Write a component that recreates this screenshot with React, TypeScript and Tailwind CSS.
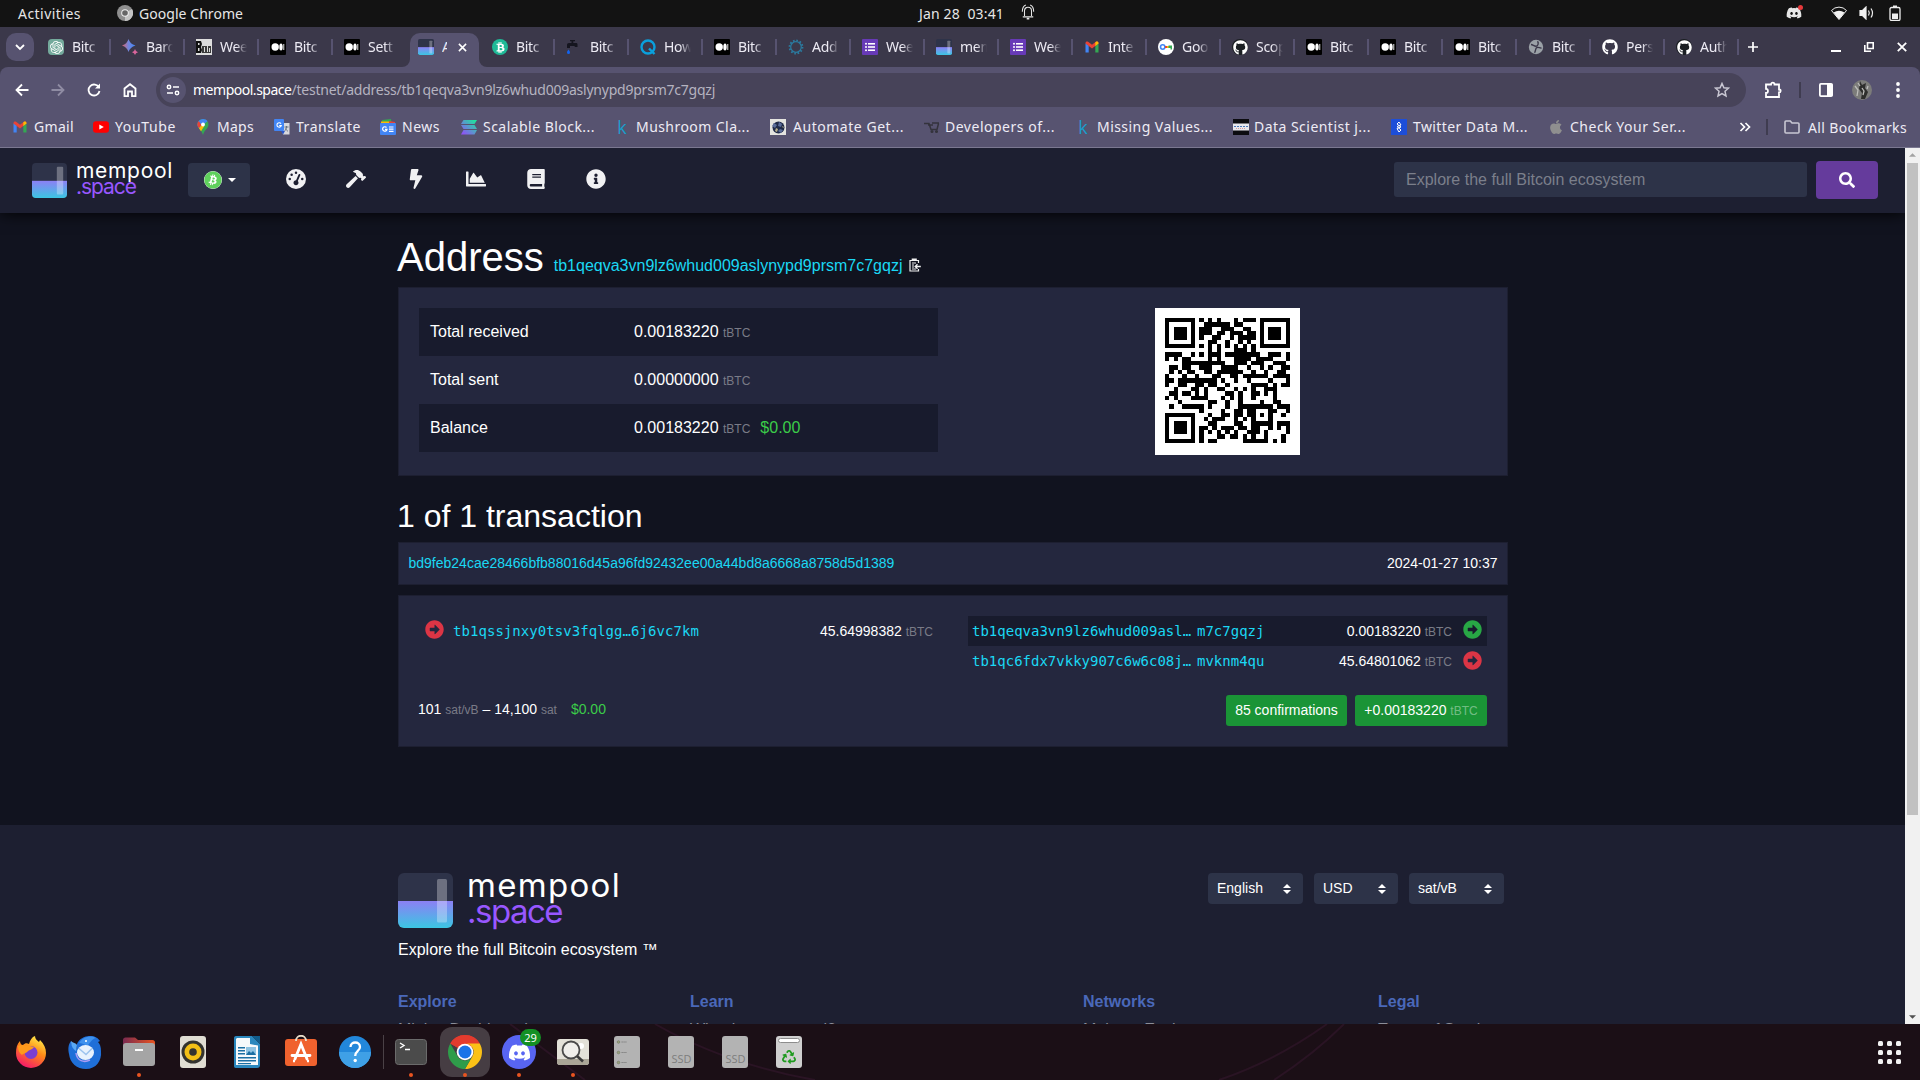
import React from "react";
import {
  FaHammer, FaBolt, FaChartArea, FaBook, FaInfoCircle, FaSearch, FaGithub,
  FaDiscord, FaBitcoin, FaBtc, FaApple, FaRecycle, FaArrowAltCircleRight,
} from "react-icons/fa";
import { FaGaugeHigh } from "react-icons/fa6";
import { SiOpenai } from "react-icons/si";

/* ---------- text that is tracked to an exact width ---------- */
const measure = (text: string, font: string) => {
  const ctx = document.createElement("canvas").getContext("2d")!;
  ctx.font = font;
  return ctx.measureText(text).width;
};

function Fit({ w, size = 14, font = "Noto Sans", weight = 400, className = "", children }: {
  w: number; size?: number; font?: string; weight?: number; className?: string; children: string;
}) {
  const natural = measure(children, `${weight} ${size}px "${font}"`);
  return (
    <span
      className={"whitespace-pre " + className}
      style={{ fontFamily: `"${font}", sans-serif`, fontSize: size, fontWeight: weight, letterSpacing: (w - natural) / children.length }}
    >
      {children}
    </span>
  );
}

/* ---------- QR code, version 3-L, byte mode ---------- */
function qrMatrix(text: string, mask: number): boolean[][] {
  const N = 29, DATA = 55, EC = 15;
  const bits: number[] = [];
  const put = (v: number, n: number) => { for (let i = n - 1; i >= 0; i--) bits.push((v >> i) & 1); };
  put(4, 4);
  put(text.length, 8);
  for (const c of text) put(c.charCodeAt(0), 8);
  put(0, 4);
  while (bits.length % 8) bits.push(0);
  const words: number[] = [];
  for (let i = 0; i < bits.length; i += 8) words.push(parseInt(bits.slice(i, i + 8).join(""), 2));
  for (let p = 0; words.length < DATA; p++) words.push(p % 2 ? 0x11 : 0xec);

  const mul = (a: number, b: number) => {
    let r = 0;
    for (let i = 7; i >= 0; i--) { r = (r << 1) ^ ((r >> 7) * 0x11d); if ((b >> i) & 1) r ^= a; }
    return r;
  };
  const gen: number[] = new Array(EC).fill(0);
  gen[EC - 1] = 1;
  let root = 1;
  for (let i = 0; i < EC; i++) {
    for (let j = 0; j < EC; j++) { gen[j] = mul(gen[j], root); if (j + 1 < EC) gen[j] ^= gen[j + 1]; }
    root = mul(root, 2);
  }
  const rem: number[] = new Array(EC).fill(0);
  for (const d of words) {
    const f = d ^ rem.shift()!;
    rem.push(0);
    gen.forEach((g, i) => { rem[i] ^= mul(g, f); });
  }
  const all = words.concat(rem);

  const m: boolean[][] = Array.from({ length: N }, () => new Array(N).fill(false));
  const used: boolean[][] = Array.from({ length: N }, () => new Array(N).fill(false));
  const set = (r: number, c: number, v: boolean) => { if (r >= 0 && c >= 0 && r < N && c < N) { m[r][c] = v; used[r][c] = true; } };
  for (let i = 0; i < N; i++) { set(6, i, i % 2 === 0); set(i, 6, i % 2 === 0); }
  for (const [cr, cc] of [[3, 3], [3, N - 4], [N - 4, 3]])
    for (let y = -4; y <= 4; y++) for (let x = -4; x <= 4; x++) {
      const d = Math.max(Math.abs(x), Math.abs(y));
      set(cr + y, cc + x, d !== 2 && d !== 4);
    }
  for (let y = -2; y <= 2; y++) for (let x = -2; x <= 2; x++) set(22 + y, 22 + x, Math.max(Math.abs(x), Math.abs(y)) !== 1);

  const fd = (1 << 3) | mask;
  let fr = fd;
  for (let i = 0; i < 10; i++) fr = (fr << 1) ^ ((fr >> 9) * 0x537);
  const fmt = ((fd << 10) | fr) ^ 0x5412;
  const b = (i: number) => ((fmt >> i) & 1) === 1;
  for (let i = 0; i <= 5; i++) set(i, 8, b(i));
  set(7, 8, b(6)); set(8, 8, b(7)); set(8, 7, b(8));
  for (let i = 9; i < 15; i++) set(8, 14 - i, b(i));
  for (let i = 0; i < 8; i++) set(8, N - 1 - i, b(i));
  for (let i = 8; i < 15; i++) set(N - 15 + i, 8, b(i));
  set(N - 8, 8, true);

  const masks: ((r: number, c: number) => boolean)[] = [
    (r, c) => (r + c) % 2 === 0, (r) => r % 2 === 0, (_, c) => c % 3 === 0, (r, c) => (r + c) % 3 === 0,
    (r, c) => (Math.floor(c / 3) + Math.floor(r / 2)) % 2 === 0, (r, c) => ((r * c) % 2) + ((r * c) % 3) === 0,
    (r, c) => (((r * c) % 2) + ((r * c) % 3)) % 2 === 0, (r, c) => (((r + c) % 2) + ((r * c) % 3)) % 2 === 0,
  ];
  let k = 0;
  for (let right = N - 1; right >= 1; right -= 2) {
    if (right === 6) right = 5;
    for (let v = 0; v < N; v++) for (let j = 0; j < 2; j++) {
      const c = right - j;
      const up = ((right + 1) & 2) === 0;
      const r = up ? N - 1 - v : v;
      if (used[r][c]) continue;
      const bit = k < all.length * 8 ? ((all[k >> 3] >> (7 - (k & 7))) & 1) === 1 : false;
      k++;
      m[r][c] = bit !== masks[mask](r, c);
    }
  }
  return m;
}

const ADDRESS = "tb1qeqva3vn9lz6whud009aslynypd9prsm7c7gqzj";

function QR() {
  const m = qrMatrix(ADDRESS, 3);
  return (
    <svg className="block size-[125px]" viewBox="0 0 29 29" shapeRendering="crispEdges">
      {m.map((row, r) => row.map((on, c) => (on ? <rect key={r + "-" + c} x={c} y={r} width="1" height="1" /> : null)))}
    </svg>
  );
}

/* ---------- favicons ---------- */
const Medium = () => (
  <svg viewBox="0 0 16 16" className="size-4"><rect width="16" height="16" rx="1" fill="#000" /><circle cx="5.2" cy="8" r="3.7" fill="#fff" /><ellipse cx="11" cy="8" rx="1.7" ry="3.5" fill="#fff" /><rect x="13.2" y="5" width="1.1" height="6" fill="#ccc" /></svg>
);
const Mem = ({ className = "size-4" }: { className?: string }) => (
  <svg viewBox="0 0 55 55" className={className}>
    <defs>
      <linearGradient id="mg" x1="0" y1="0" x2="0" y2="1"><stop offset="0" stopColor="#8c80f5" /><stop offset="1" stopColor="#3bc6e2" /></linearGradient>
      <clipPath id="mc"><rect width="55" height="55" rx="6" /></clipPath>
    </defs>
    <g clipPath="url(#mc)"><rect width="55" height="55" fill="#2e3349" /><rect y="28" width="55" height="27" fill="url(#mg)" /></g>
    <rect x="39" y="6" width="10" height="43.500" rx="1.500" fill="#fff" opacity=".3" />
  </svg>
);
const Gmail = () => (
  <svg viewBox="0 0 16 16" className="size-4"><path d="M1.500 13.500V4.200l3.200 2.400v6.900z" fill="#4285f4" /><path d="M11.300 13.500V6.600l3.200-2.400v9.300z" fill="#34a853" /><path d="M1.500 4.600V4c0-1.400 1.500-2 2.600-1.200L8 5.800l3.900-3C13 2 14.500 2.600 14.500 4v.6L8 9.500z" fill="#ea4335" /><path d="M11.300 3.300l.6-.5C13 2 14.500 2.600 14.500 4v.6l-3.200 2.400z" fill="#fbbc04" /></svg>
);
const Forms = () => (
  <svg viewBox="0 0 16 16" className="size-4"><rect width="16" height="16" rx="1" fill="#673ab7" /><g fill="#fff"><circle cx="4" cy="4.800" r="1" /><circle cx="4" cy="8" r="1" /><circle cx="4" cy="11.200" r="1" /><rect x="6" y="4" width="7" height="1.600" /><rect x="6" y="7.200" width="7" height="1.600" /><rect x="6" y="10.400" width="7" height="1.600" /></g></svg>
);
const Gpt = () => (
  <span className="flex size-4 items-center justify-center rounded-sm bg-[#74aa9c] text-white"><SiOpenai size={13} /></span>
);
const Bard = () => (
  <svg viewBox="0 0 16 16" className="size-4"><defs><linearGradient id="bd"><stop offset="0" stopColor="#d96570" /><stop offset=".5" stopColor="#6f86e0" /><stop offset="1" stopColor="#4285f4" /></linearGradient></defs><path d="M6.500 0Q8 5 13.500 6.500 8 8 6.500 13 5 8 0 6.500 5 5 6.500 0z" fill="url(#bd)" /><path d="M13 10q.6 2.800 3 3.300-2.400.5-3 2.700-.6-2.200-3-2.700 2.400-.5 3-3.300z" fill="#d9659c" /></svg>
);
const Beans = () => (
  <svg viewBox="0 0 16 16" className="size-4"><rect width="16" height="16" fill="#ddd" /><path d="M0 2h5l1 3-1 3 1 3-1 3H0z" fill="#111" /><path d="M2 4h1.500v2H2zM2 9h1.500v3H2z" fill="#ddd" /><path d="M6 7h9v7H6z" fill="#3b3b3b" /><path d="M8 8h1v5H8zM11 7h1v6h-1zM13 9h1v4h-1z" fill="#ddd" /></svg>
);
const BtcTeal = () => (
  <span className="flex size-4 items-center justify-center rounded-full bg-[#1fb997] text-white"><FaBtc size={11} /></span>
);
const Faucet = () => (
  <svg viewBox="0 0 16 16" className="size-4"><path d="M4 1h5v1.200H7.300V4H10c1 0 1.500.5 1.500 1.500V8h-2.800V7H4v2H1V6c0-1.300.8-2 2-2h2.500V2.200H4z" fill="#15151f" /><path d="M2.500 10.500c.8 1.300 1.500 2 1.500 3a1.500 1.500 0 0 1-3 0c0-1 .7-1.700 1.500-3z" fill="#1263f0" /></svg>
);
const QLogo = () => (
  <svg viewBox="0 0 16 16" className="size-4" fill="none" stroke="#0aa0dc" strokeWidth="2.400"><circle cx="8" cy="8" r="6.500" /><path d="M9 9.500l5.500 5.500" /></svg>
);
const Ring = () => (
  <svg viewBox="0 0 16 16" className="size-4" fill="none" stroke="#2b7ba0"><circle cx="8" cy="8" r="5.300" strokeWidth="1.200" /><circle cx="8" cy="8" r="6.400" strokeWidth="2" strokeDasharray="1.600 1.700" /></svg>
);
const Goo = () => (
  <svg viewBox="0 0 16 16" className="size-4"><circle cx="8" cy="8" r="8" fill="#fff" /><circle cx="4.700" cy="8" r="2.200" fill="none" stroke="#4285f4" strokeWidth="1.600" /><rect x="7" y="7" width="3" height="2" fill="#ea4335" /><rect x="9" y="7" width="2" height="2" fill="#fbbc04" /><path d="M10.500 6.500h3.500v4h-1.500V9h-2z" fill="#34a853" /></svg>
);
const GhBadge = () => (
  <span className="flex size-4 items-center justify-center rounded-full bg-[#1b1f23] text-white"><FaGithub size={15} /></span>
);
const Globe = () => (
  <svg viewBox="0 0 16 16" className="size-4"><circle cx="8" cy="8" r="7.200" fill="#9aa0a6" /><path d="M3 5.500c2 .2 3 1.700 5 1.700S11 4 9.500 2.200M13.500 9c-2 .3-2.500-1-4.500-.5S8 12 6.500 13.800" stroke="#3b384a" strokeWidth="1.400" fill="none" /></svg>
);

type Tab = { t: string; i: React.ReactNode; sep?: boolean };
const TABS: Tab[] = [
  { t: "Bitc", i: <Gpt />, sep: true }, { t: "Bard", i: <Bard />, sep: true }, { t: "Wee", i: <Beans />, sep: true },
  { t: "Bitc", i: <Medium />, sep: true }, { t: "Sett", i: <Medium /> },
  { t: "A", i: <Mem /> },
  { t: "Bitc", i: <BtcTeal />, sep: true }, { t: "Bitc", i: <Faucet />, sep: true }, { t: "How", i: <QLogo />, sep: true },
  { t: "Bitc", i: <Medium />, sep: true }, { t: "Add", i: <Ring />, sep: true }, { t: "Wee", i: <Forms />, sep: true },
  { t: "mem", i: <Mem />, sep: true }, { t: "Wee", i: <Forms />, sep: true }, { t: "Inte", i: <Gmail />, sep: true },
  { t: "Goo", i: <Goo />, sep: true }, { t: "Scop", i: <GhBadge />, sep: true }, { t: "Bitc", i: <Medium />, sep: true },
  { t: "Bitc", i: <Medium />, sep: true }, { t: "Bitc", i: <Medium />, sep: true }, { t: "Bitc", i: <Globe />, sep: true },
  { t: "Pers", i: <FaGithub size={16} color="#fff" />, sep: true }, { t: "Auth", i: <GhBadge />, sep: true },
];

const Kaggle = () => <span className="font-['Open_Sans'] text-[18px] leading-none text-[#1a9dcb]">k</span>;

/* x: start of the icon slot, tx: start of the label, w: label width, n: start of the next item */
const MARKS = [
  { t: "Gmail", i: <Gmail />, x: 12, tx: 34, w: 40, n: 93 },
  { t: "YouTube", i: <svg viewBox="0 0 16 16" className="size-4"><rect y="2.200" width="16" height="11.600" rx="3" fill="#f00" /><path d="M6.300 5.400l4.500 2.600-4.500 2.600z" fill="#fff" /></svg>, x: 93, tx: 115, w: 61, n: 195 },
  { t: "Maps", i: <svg viewBox="0 0 16 16" className="size-4"><path d="M8 0a5.500 5.500 0 0 1 5.500 5.500c0 4-4 5-5.500 10.500C6.500 10.500 2.500 9.500 2.500 5.500A5.500 5.500 0 0 1 8 0z" fill="#34a853" /><path d="M2.500 5.500A5.500 5.500 0 0 1 8 0c2 0 3.500.8 4.500 2.200L4 9.300c-.9-1.200-1.500-2.300-1.500-3.800z" fill="#4285f4" /><path d="M3.800 2A5.500 5.500 0 0 0 4 9.300l2.500-3z" fill="#ea4335" /><path d="M4 9.300l3-3.500 2.500 1L6 12.300z" fill="#fbbc04" /><circle cx="8" cy="5.500" r="1.900" fill="#fff" /></svg>, x: 195, tx: 217, w: 37, n: 274 },
  { t: "Translate", i: <svg viewBox="0 0 16 16" className="size-4"><path d="M6 4h9.500v11.500H9z" fill="#d8d8dc" /><rect width="10" height="12" rx="1" fill="#4285f4" /><path d="M7 12h4l-2 3.500z" fill="#2a56c6" /><path d="M7 4.700A2.200 2.200 0 1 0 7.300 6.500H5.200" stroke="#fff" strokeWidth="1.100" fill="none" /><path d="M10.500 8h4M12.500 7v1c0 2-1 3-2 4M11.500 9.500c.5 1.500 1.500 2 2.500 2.800" stroke="#5f6a78" fill="none" strokeWidth=".9" /></svg>, x: 274, tx: 296, w: 65, n: 380 },
  { t: "News", i: <svg viewBox="0 0 16 16" className="size-4"><path d="M2 1l9-1 .5 5H2z" fill="#34a853" /><path d="M1 2.500h8V6H1z" fill="#fbbc04" /><path d="M9 2l6 1v3H9z" fill="#ea4335" /><rect y="4" width="16" height="12" rx="1" fill="#4285f4" /><path d="M6.500 8.500A2.200 2.200 0 1 0 7 10.300H5M9 8h4.500M9 10.200h4.500M9 12.400h4.500" stroke="#fff" strokeWidth="1.200" fill="none" /></svg>, x: 380, tx: 402, w: 38, n: 461 },
  { t: "Scalable Block...", i: <svg viewBox="0 0 16 16" className="size-4"><defs><linearGradient id="sol" x1="1" y1="0" x2="0" y2="1"><stop offset="0" stopColor="#14f195" /><stop offset="1" stopColor="#9945ff" /></linearGradient></defs><path d="M2.500 1H16l-2.500 4H0zM0 6h13.500L16 10H2.500zM2.500 11H16l-2.500 4.500H0z" fill="url(#sol)" /></svg>, x: 460, tx: 482, w: 112, n: 613 },
  { t: "Mushroom Cla...", i: <Kaggle />, x: 614, tx: 636, w: 114, n: 770 },
  { t: "Automate Get...", i: <svg viewBox="0 0 16 16" className="size-4"><rect width="16" height="16" fill="#e4e4e0" /><circle cx="8.500" cy="8.500" r="6" fill="#1f2a48" /><path d="M4 4l3 2-2 3-3-2zM9 3l3 2-1 3-3-1zM10 10l3 1-2 3-3-2z" fill="#5a6c9a" /><path d="M6 9l2 1-1 3-2-1zM12 7l2 1-1 1z" fill="#b9b08a" /></svg>, x: 769, tx: 792, w: 111, n: 923 },
  { t: "Developers of...", i: <svg viewBox="0 0 16 16" className="size-4" fill="none" stroke="#34333c" strokeWidth="1.500"><path d="M0 4.500h5l2 6h6l1.500-6M4 6h5M8 4h7" /><circle cx="8" cy="12.500" r=".8" /><circle cx="12.500" cy="12.500" r=".8" /></svg>, x: 924, tx: 945, w: 110, n: 1075 },
  { t: "Missing Values...", i: <Kaggle />, x: 1075, tx: 1097, w: 116, n: 1233 },
  { t: "Data Scientist j...", i: <svg viewBox="0 0 16 16" className="size-4"><rect width="16" height="16" fill="#0c0c10" /><rect y="4.500" width="16" height="7" fill="#e8e8ee" /><path d="M1 7.500h14" stroke="#4a78b8" strokeDasharray="2 1" /><path d="M3 9.500h10" stroke="#c77" strokeWidth=".7" strokeDasharray="1 1" /></svg>, x: 1233, tx: 1254, w: 117, n: 1391 },
  { t: "Twitter Data M...", i: <svg viewBox="0 0 16 16" className="size-4"><rect width="16" height="16" fill="#1d4ed8" /><path d="M8 3l-2 2 4 3-4 1.500L8 13l2-2-4-3.500L10 6z" stroke="#fff" strokeWidth="1" fill="none" /></svg>, x: 1391, tx: 1413, w: 115, n: 1548 },
  { t: "Check Your Ser...", i: <FaApple size={16} color="#8f8f8f" />, x: 1548, tx: 1570, w: 116, n: 1700 },
];

/* ---------- desktop top bar ---------- */
function TopBar() {
  return (
    <div className="flex h-[27px] items-center bg-[#131313] text-[#e6e6e6]">
      <div className="-mt-0.5 ml-[18px] w-[99px]"><Fit w={63}>Activities</Fit></div>
      <svg viewBox="0 0 16 16" className="-mt-0.5 size-4"><circle cx="8" cy="8" r="8" fill="#8f8f8f" /><path d="M8 8L15 4a8 8 0 0 1-7 12z" fill="#c4c4c4" /><circle cx="8" cy="8" r="3.800" fill="#eee" /><circle cx="8" cy="8" r="2.800" fill="#666" /></svg>
      <div className="-mt-0.5 ml-1.5 w-[780px]"><Fit w={104}>Google Chrome</Fit></div>
      <div className="-mt-0.5"><Fit w={85}>Jan 28  03:41</Fit></div>
      <svg viewBox="0 0 16 18" className="-mt-0.5 ml-[17px] h-[17px] w-[14px]" fill="none" stroke="#e6e6e6" strokeWidth="1.200"><path d="M4 13V7a4 4 0 0 1 8 0v6M2 14h12M1.500 8c0-4 1.500-6.500 4-7.500M14.500 8c0-4-1.500-6.500-4-7.500" /><path d="M6.500 16h3" strokeWidth="2" /></svg>
      <div className="relative -mt-0.5 ml-[751px]"><FaDiscord size={16} /><span className="absolute -right-px top-0 size-[5px] rounded-full bg-[#e5393b]" /></div>
      <svg viewBox="0 0 16 14" className="-mt-0.5 ml-[29px] h-[14px] w-4"><path d="M8 13.500L.5 4.500A10 10 0 0 1 15.500 4.500z" fill="none" stroke="#eee" strokeWidth="1" /><path d="M8 13.500L2.500 6.500q5.500-3.500 11 0z" fill="#f2f2f2" /></svg>
      <svg viewBox="0 0 16 14" className="-mt-0.5 ml-[12px] h-[14px] w-4" fill="none" stroke="#eee" strokeWidth="1.200"><path d="M1 4.500h2.500L7 1v12L3.500 9.500H1z" fill="#f2f2f2" /><path d="M9.500 4.500q1.600 2.500 0 5M12 2.500q3 4.500 0 9" /></svg>
      <svg viewBox="0 0 12 16" className="-mt-0.5 ml-[14px] h-4 w-3"><rect x="1" y="2.500" width="10" height="13" rx="1.500" fill="none" stroke="#eee" strokeWidth="1.300" /><rect x="4" y=".5" width="4" height="2" fill="#eee" /><rect x="3" y="8.500" width="6" height="5.500" fill="#eee" /></svg>
    </div>
  );
}

/* ---------- browser chrome ---------- */
function TabStrip() {
  return (
    <div className="flex h-10 bg-[#3b384a] text-[#eceaf3]">
      <div className="ml-1.5 mt-1.5 flex h-7 w-7 items-center justify-center rounded-[10px] bg-[#575370]">
        <svg viewBox="0 0 10 10" className="size-2.5" fill="none" stroke="#fff" strokeWidth="1.800"><path d="M1 3l4 4 4-4" /></svg>
      </div>
      <div className="ml-[3px] flex">
        {TABS.map((tab, i) =>
          i === 5 ? (
            <div key={i} className="relative mt-1.5 flex h-[34px] w-[74px] items-center">
              <div className="absolute inset-y-0 left-[3px] right-[2px] rounded-t-[10px] bg-[#575370]" />
              <svg viewBox="0 0 8 8" className="absolute bottom-0 -left-[5px] size-2"><path d="M8 0v8H0a8 8 0 0 0 8-8z" fill="#575370" /></svg>
              <svg viewBox="0 0 8 8" className="absolute bottom-0 -right-[6px] size-2"><path d="M0 0v8h8a8 8 0 0 1-8-8z" fill="#575370" /></svg>
              <div className="relative -mt-1.5 ml-[11px] flex items-center">
                {tab.i}
                <span className="ml-2 w-[5px] overflow-hidden font-['Noto_Sans'] text-sm">A</span>
                <svg viewBox="0 0 10 10" className="ml-[11px] size-[9px]" stroke="#fff" strokeWidth="1.700"><path d="M1 1l8 8M9 1l-8 8" /></svg>
              </div>
            </div>
          ) : (
            <div key={i} className="flex w-[74px] items-center pl-[11px]">
              <span className="flex size-4 shrink-0 items-center justify-center">{tab.i}</span>
              <span className="ml-2 w-7 overflow-hidden whitespace-nowrap font-['Noto_Sans'] text-sm tracking-[-0.3px] [mask-image:linear-gradient(90deg,#000_60%,transparent)]">{tab.t}</span>
              {tab.sep && <span className="ml-[10px] h-4 w-0.5 shrink-0 bg-[#575370]" />}
            </div>
          )
        )}
      </div>
      <svg viewBox="0 0 10 10" className="ml-[9px] mt-[15px] size-2.5" stroke="#fff" strokeWidth="1.700"><path d="M5 0v10M0 5h10" /></svg>
      <div className="ml-auto mr-[13px] flex items-center gap-[23px] text-white">
        <span className="mt-2 h-0.5 w-2.5 bg-white" />
        <svg viewBox="0 0 10 10" className="h-2.5 w-2.5" fill="none" stroke="#fff" strokeWidth="1.600"><path d="M3.500.800h5.700v5.700H3.500zM.8 3v6.200H7" /></svg>
        <svg viewBox="0 0 10 10" className="h-2.5 w-2.5" stroke="#fff" strokeWidth="1.800"><path d="M.8.800l8.400 8.400M9.200.800L.8 9.200" /></svg>
      </div>
    </div>
  );
}

function Toolbar() {
  const s = { fill: "none", stroke: "#fff", strokeWidth: 1.8 };
  return (
    <div className="bg-[#3b384a]">
      <div className="h-[81px] rounded-t-lg border-b border-[#7b7891] bg-[#575370] text-[#eeecf5]">
        <div className="flex h-[46px] items-center">
          <svg viewBox="0 0 14 14" className="ml-[15px] size-3.5" {...s}><path d="M13.500 7H1.500M7 1.500L1.500 7 7 12.500" /></svg>
          <svg viewBox="0 0 14 14" className="ml-[22px] size-3.5" {...s} stroke="#8f8ca3"><path d="M.5 7h12M7 1.500L12.500 7 7 12.500" /></svg>
          <svg viewBox="0 0 14 14" className="ml-[22px] size-3.5" {...s}><path d="M12 4.500A5.500 5.500 0 1 0 12.500 8" /><path d="M13 .5v5H8z" fill="#fff" stroke="none" /></svg>
          <svg viewBox="0 0 14 14" className="ml-[22px] size-3.5" {...s}><path d="M1.500 5.500L7 1.200l5.500 4.300v7.700H9V8.500H5v4.700H1.500z" /></svg>
          <div className="ml-[19px] flex h-[34px] w-[1590px] items-center rounded-full bg-[#474359] pl-1">
            <span className="flex size-[26px] items-center justify-center rounded-full bg-[#575370]">
              <svg viewBox="0 0 14 12" className="h-3 w-3.5" fill="none" stroke="#fff" strokeWidth="1.500"><circle cx="3" cy="3" r="1.700" /><path d="M7 3h6M1 9h6" /><circle cx="11" cy="9" r="1.700" /></svg>
            </span>
            <span className="-mt-0.5 ml-[7px] flex">
              <Fit w={98.5} className="text-white">mempool.space</Fit>
              <Fit w={423.5} className="text-[#b5b3c0]">/testnet/address/tb1qeqva3vn9lz6whud009aslynypd9prsm7c7gqzj</Fit>
            </span>
            <svg viewBox="0 0 16 16" className="ml-auto mr-4 size-4" fill="none" stroke="#c9c7d3" strokeWidth="1.500"><path d="M8 1.500l1.900 4.300 4.600.4-3.500 3.100 1 4.600L8 11.500l-4 2.400 1-4.600L1.500 6.200l4.600-.4z" /></svg>
          </div>
          <svg viewBox="0 0 18 18" className="ml-[18px] h-[18px] w-[18px]" fill="none" stroke="#fff" strokeWidth="1.800"><path d="M2 3.500h5c0-2.500 3.500-2.500 3.500 0h4.500v5c2.200 0 2.200 3 0 3v4.500H2v-4c2.600 0 2.600-4.200 0-4.200z" /></svg>
          <span className="ml-[17px] h-4 w-0.5 bg-[#3f3c50]" />
          <svg viewBox="0 0 14 14" className="ml-[18px] size-3.5" ><rect x=".9" y=".9" width="12.200" height="12.200" rx="1" fill="none" stroke="#fff" strokeWidth="1.800" /><rect x="8" y="1" width="5.500" height="12" fill="#fff" /></svg>
          <svg viewBox="0 0 20 20" className="ml-[19px] size-5"><circle cx="10" cy="10" r="10" fill="#7c7c7a" /><path d="M8 1l2 4 4-2-1 5 3 4-3 7H9l1-6-3-4z" fill="#2e2e2c" /><path d="M3 6l3 4-1 6M16 6l-1 3M10 8l2 3-1 4M6 3l2 3" stroke="#bdbdba" strokeWidth="1.300" fill="none" /></svg>
          <svg viewBox="0 0 4 18" className="ml-[24px] h-[18px] w-1" fill="#fff"><circle cx="2" cy="3" r="1.900" /><circle cx="2" cy="9" r="1.900" /><circle cx="2" cy="15" r="1.900" /></svg>
        </div>
        <div className="flex h-[27px] items-center pl-3">
          {MARKS.map((m) => (
            <div key={m.tx} className="flex items-center" style={{ width: m.n - m.x }}>
              <span className="flex h-4 w-4 shrink-0 items-center justify-center" style={{ marginRight: m.tx - m.x - 16 }}>{m.i}</span>
              <Fit w={m.w}>{m.t}</Fit>
            </div>
          ))}
          <svg viewBox="0 0 12 10" className="ml-[39px] h-2.5 w-3" fill="none" stroke="#fff" strokeWidth="1.700"><path d="M1.500 1l4 4-4 4M6.500 1l4 4-4 4" /></svg>
          <span className="ml-[15px] h-4 w-0.5 bg-[#3f3c50]" />
          <svg viewBox="0 0 16 14" className="ml-4 h-3.5 w-4" fill="none" stroke="#c9c7d3" strokeWidth="1.600"><path d="M1 2.500V12c0 .6.400 1 1 1h12c.6 0 1-.4 1-1V4c0-.6-.4-1-1-1H8L6.300 1H2c-.6 0-1 .4-1 1z" /></svg>
          <div className="ml-2"><Fit w={99}>All Bookmarks</Fit></div>
        </div>
      </div>
    </div>
  );
}

/* ---------- page ---------- */
const Unit = ({ children }: { children: string }) => <span className="text-xs text-[#7a7b87]">{children}</span>;

function Navbar() {
  const icons = [FaGaugeHigh, FaHammer, FaBolt, FaChartArea, FaBook, FaInfoCircle];
  return (
    <nav className="relative flex h-[65px] items-start bg-[#1d1f31] shadow-[0_0_15px_0_#000]">
      <Mem className="ml-8 mt-[15px] size-[35px]" />
      <div className="ml-[9px] mt-[14px] flex w-[112px] flex-col">
        <Fit w={97} size={21} font="Inter" className="leading-[18px] text-white">mempool</Fit>
        <Fit w={60} size={21} font="Inter" className="-mt-[2px] leading-[18px] text-[#9857ff]">.space</Fit>
      </div>
      <div className="mt-[15px] flex h-[34px] w-[62px] items-center rounded bg-[#2d3348] pl-[15px]">
        <FaBitcoin size={20} color="#5fd15c" className="rounded-full bg-white bg-clip-content p-px" />
        <svg viewBox="0 0 8 4" className="ml-[5px] h-1 w-2"><path d="M0 0h8L4 4z" fill="#fff" /></svg>
      </div>
      <div className="ml-[36px] mt-[21px] flex gap-10 text-[#f1f1f3]">
        {icons.map((I, i) => (
          <span key={i} className="flex size-5 items-center justify-center"><I size={20} /></span>
        ))}
      </div>
      <div className="ml-auto mr-[9px] mt-[14px] flex h-[35px] w-[413px] items-center rounded-[3px] bg-[#2d3348] pl-3 text-base text-[#7b7f8b]">Explore the full Bitcoin ecosystem</div>
      <div className="mr-[27px] mt-[13px] flex h-[38px] w-[62px] items-center justify-center rounded bg-[#653b9c] text-white"><FaSearch size={16} /></div>
    </nav>
  );
}

const Box = ({ className, children }: { className: string; children: React.ReactNode }) => (
  <div className={"border border-[#1d1f31] bg-[#24273e] " + className}>{children}</div>
);

function Out({ a, b, amount, green }: { a: string; b: string; amount: string; green?: boolean }) {
  return (
    <div className={"flex h-[30px] items-center pl-1 text-sm " + (green ? "bg-[#181b2d]" : "")}>
      <span className="w-[225px] font-['DejaVu_Sans_Mono'] text-[#1bd8f4]">{a}</span>
      <span className="font-['DejaVu_Sans_Mono'] text-[#1bd8f4]">{b}</span>
      <span className="ml-auto mr-[11px]">{amount} <Unit>tBTC</Unit></span>
      <FaArrowAltCircleRight size={19} className={"mr-[5px] " + (green ? "-mt-[3px] text-[#28a745]" : "-mt-[1px] text-[#dc3545]")} />
    </div>
  );
}

function Select({ label, className }: { label: string; className: string }) {
  return (
    <div className={"flex h-[31px] items-center justify-between rounded bg-[#2d3348] pl-[9px] pr-3 text-sm text-white " + className}>
      <span className="-mt-0.5">{label}</span>
      <svg viewBox="0 0 8 10" className="h-2.5 w-2" fill="#fff"><path d="M4 0l4 4H0zM4 10L0 6h8z" /></svg>
    </div>
  );
}

function FootCol({ h, l, className }: { h: string; l: string; className: string }) {
  return (
    <div className={className}>
      <p className="text-base font-bold leading-6 text-[#4a68b9]">{h}</p>
      <p className="mt-1 text-base leading-6 text-[#8b8d98]">{l}</p>
    </div>
  );
}

function Page() {
  return (
    <div className="flex h-[876px] overflow-hidden bg-[#11131f] font-['Liberation_Sans'] text-white">
      <div className="min-w-0 grow">
        <Navbar />
        <main className="ml-[398px] h-[612px] w-[1110px] pt-5">
          <div className="flex h-12 items-baseline">
            <h1 className="-ml-px text-[40px] leading-[48px]">Address</h1>
            <span className="ml-2.5 text-base text-[#1bd8f4]">{ADDRESS}</span>
            <svg viewBox="0 0 12 14" className="mb-[9px] ml-[7px] h-[14px] w-3 self-end" fill="none" stroke="#f1f1f1" strokeWidth="1.200"><path d="M9.500 5V2.500H1V13h8.500v-2" /><path d="M3.500 2.500V1.200h3.500v1.300" strokeWidth="1.600" /><path d="M3 5h4M3 7h2M3 9h2M3 11h4" strokeWidth="1" /><path d="M11.800 8.500H6.500M8.500 6.200L6.200 8.500l2.300 2.300" strokeWidth="1.400" /></svg>
          </div>
          <Box className="mt-1.5 flex h-[189px] p-5">
            <div className="w-[519px]">
              {[["Total received", "0.00183220"], ["Total sent", "0.00000000"], ["Balance", "0.00183220"]].map(([k, v], i) => (
                <div key={k} className={"flex h-12 items-center pl-[11px] " + (i % 2 ? "" : "bg-[#181b2d]")}>
                  <span className="w-[204px]">{k}</span>
                  <span>{v} <Unit>tBTC</Unit>{i === 2 && <span className="ml-2.5 text-[#3bcc49]">$0.00</span>}</span>
                </div>
              ))}
            </div>
            <div className="ml-[217px] h-[147px] w-[145px] bg-white p-2.5"><QR /></div>
          </Box>
          <h2 className="-ml-px mt-[21px] text-[32px] leading-[38px]">1 of 1 transaction</h2>
          <Box className="mt-[7px] flex h-[43px] items-center justify-between px-[9.5px] pb-px text-sm">
            <span className="text-[#1bd8f4]">bd9feb24cae28466bfb88016d45a96fd92432ee00a44bd8a6668a8758d5d1389</span>
            <span>2024-01-27 10:37</span>
          </Box>
          <Box className="mt-2.5 h-[152px] px-5 pt-5">
            <div className="flex justify-between">
              <div className="flex h-[30px] w-[519px] items-center pl-[6px] text-sm">
                <FaArrowAltCircleRight size={19} className="-mt-[3px] text-[#dc3545]" />
                <span className="ml-[9px] font-['DejaVu_Sans_Mono'] tracking-[0.05px] text-[#1bd8f4]">tb1qssjnxy0tsv3fqlgg…6j6vc7km</span>
                <span className="ml-auto mr-[5px]">45.64998382 <Unit>tBTC</Unit></span>
              </div>
              <div className="w-[519px]">
                <Out a="tb1qeqva3vn9lz6whud009asl…" b="m7c7gqzj" amount="0.00183220" green />
                <Out a="tb1qc6fdx7vkky907c6w6c08j…" b="mvknm4qu" amount="45.64801062" />
              </div>
            </div>
            <div className="mt-[19px] flex h-[31px] items-center justify-between text-sm">
              <span className="-ml-px pb-[3px]">101 <Unit>sat/vB</Unit> – 14,100 <Unit>sat</Unit><span className="ml-3.5 text-[#3bcc49]">$0.00</span></span>
              <div className="flex gap-2">
                <span className="flex h-[31px] w-[121px] items-center justify-center rounded-[3px] bg-[#1a9436] pb-0.5">85 confirmations</span>
                <span className="flex h-[31px] w-[132px] items-center justify-center rounded-[3px] bg-[#1a9436] pb-0.5"><span>+0.00183220 <span className="text-xs text-white/40">tBTC</span></span></span>
              </div>
            </div>
          </Box>
        </main>
        <footer className="h-[199px] overflow-hidden bg-[#1d1f31] pl-[398px] pt-12">
          <div className="flex h-[55px]">
            <Mem className="size-[55px]" />
            <div className="ml-[14px] mt-[-1px] flex w-[162px] flex-col">
              <Fit w={154} size={33} font="Inter" className="leading-[27px]">mempool</Fit>
              <Fit w={95} size={33} font="Inter" className="-mt-px leading-[27px] text-[#9857ff]">.space</Fit>
            </div>
            <div className="ml-[579px] flex gap-[11px]">
              <Select label="English" className="w-[95px]" />
              <Select label="USD" className="w-[84px]" />
              <Select label="sat/vB" className="w-[95px]" />
            </div>
          </div>
          <p className="mt-[10px] text-base leading-6">Explore the full Bitcoin ecosystem ™</p>
          <div className="mt-7 flex">
            <FootCol h="Explore" l="Mining Dashboard" className="w-[292px]" />
            <FootCol h="Learn" l="What is a mempool?" className="w-[393px]" />
            <FootCol h="Networks" l="Mainnet Explorer" className="w-[295px]" />
            <FootCol h="Legal" l="Terms of Service" className="w-[200px]" />
          </div>
        </footer>
      </div>
      <div className="relative z-10 flex w-[15px] flex-col items-center bg-[#f1f1f1] py-[5px]">
        <svg viewBox="0 0 8 4" className="h-1 w-[7px]"><path d="M4 0l4 4H0z" fill="#a3a3a3" /></svg>
        <div className="mt-[6px] h-[652px] w-[11px] bg-[#c1c1c1]" />
        <svg viewBox="0 0 8 4" className="mt-auto h-1 w-[7px]"><path d="M0 0h8L4 4z" fill="#505050" /></svg>
      </div>
    </div>
  );
}

/* ---------- dock ---------- */
const Ssd = () => (
  <svg viewBox="0 0 34 34" className="size-[34px]"><rect x="4" y="1" width="26" height="32" rx="3" fill="#b3b3b3" /><text x="7.500" y="28" fontFamily="Open Sans" fontSize="11" fill="#7d7d7d">SSD</text></svg>
);
const DOCK: { n: string; dot?: boolean; i: React.ReactNode }[] = [
  { n: "firefox", i: <svg viewBox="0 0 34 34" className="size-[34px]"><defs><linearGradient id="ff" x1=".8" y1="0" x2=".3" y2="1"><stop offset="0" stopColor="#fff44f" /><stop offset=".45" stopColor="#ff8a16" /><stop offset="1" stopColor="#f5156c" /></linearGradient></defs><path d="M6 6c0 2 1 4 3 4 2-2 4-2 6-1 1-4 3-7 6-8 0 3 2 4 4 6l1-2c4 4 6 8 6 13a15 15 0 0 1-30 0c0-5 1-9 4-12z" fill="url(#ff)" /><circle cx="17" cy="17.500" r="6.500" fill="#7b3fd0" /><path d="M4 11c4-2 8 0 12 0l4 1c-2 3-5 3-6 4-2 3-5 2-6 4-3-2-4-5-4-9z" fill="#ff9a1c" /></svg> },
  { n: "thunderbird", i: <svg viewBox="0 0 34 34" className="size-[34px]"><path d="M3 6C0 10 0 14 1 19c1 9 8 15 17 15 10 0 16-8 15-18 0-4-1-7-3-9l2-1c-2-3-5-5-10-5-6 0-11 3-13 8l-1 6C5 13 3 10 3 6z" fill="#1f6fd8" /><path d="M11 8c4-6 11-8 17-5-5 1-6 6-9 8-3-2-6-3-8-3z" fill="#3f92ee" /><path d="M3 6c0 5 2 8 5 10l1-6C8 8 5 8 3 6z" fill="#5aa9f5" /><ellipse cx="17.500" cy="17.500" rx="8.500" ry="7.500" fill="#e8f2fd" /><path d="M11 13.500l7 6 6-6" fill="none" stroke="#9cc3ee" strokeWidth="1.500" /><path d="M8 18c1 8 8 10 14 7" stroke="#a99cf5" strokeWidth="1.500" fill="none" /><circle cx="18" cy="6" r="1" fill="#fff" /></svg> },
  { n: "files", dot: true, i: <svg viewBox="0 0 34 34" className="size-[34px]"><defs><linearGradient id="fl"><stop offset="0" stopColor="#7a2a50" /><stop offset="1" stopColor="#e95420" /></linearGradient></defs><path d="M1 5c0-1.500 1-2.500 2.500-2.500H13l3 2.500h14.500C32 5 33 6 33 7.500V14H1z" fill="url(#fl)" /><rect x="1" y="8" width="32" height="23" rx="3" fill="#a5a5a5" /><rect x="13" y="14" width="8" height="2" fill="#fff" /></svg> },
  { n: "rhythmbox", i: <svg viewBox="0 0 34 34" className="size-[34px]"><rect x="4" y="1" width="26" height="32" rx="3" fill="#e0ddd3" /><circle cx="17" cy="17" r="11.500" fill="#33332f" /><circle cx="17" cy="17" r="8.500" fill="#f2bf16" /><circle cx="17" cy="17" r="3.800" fill="#33332f" /></svg> },
  { n: "writer", i: <svg viewBox="0 0 34 34" className="size-[34px]"><path d="M6 1h16l8 8v21c0 2-1 3-3 3H6c-2 0-2-1-2-3V3c0-1 .5-2 2-2z" fill="#2a87bd" /><path d="M7 3h13v6l8 1.500V30H6V4z" fill="#f6f9fb" /><path d="M22 1h8v8z" fill="#115d8c" /><g fill="#1b6fa3"><rect x="8" y="12" width="7" height="1.500" /><rect x="8" y="15" width="7" height="1.500" /><rect x="8" y="18" width="7" height="1.500" /><rect x="8" y="22" width="18" height="1.500" /><rect x="8" y="25" width="18" height="1.500" /><rect x="8" y="28" width="13" height="1.200" /></g><rect x="16" y="12" width="10" height="8" fill="#8fc3e2" /><path d="M16 20l3-4 2 2 2-2 3 4z" fill="#1b6fa3" /></svg> },
  { n: "software", i: <svg viewBox="0 0 34 34" className="size-[34px]"><rect x="1" y="4" width="32" height="27" rx="3" fill="#f0622e" /><path d="M12 6c0-7 10-7 10 0" stroke="#e9ddc9" strokeWidth="1.800" fill="none" /><path d="M11 24l6-15 6 15M8 20.500h18" stroke="#fff" strokeWidth="2.800" fill="none" strokeLinecap="round" /><path d="M9 26h2M23 26h2" stroke="#fff" strokeWidth="2.500" /></svg> },
  { n: "help", i: <svg viewBox="0 0 34 34" className="size-[34px]"><circle cx="17" cy="17" r="16" fill="#2287da" /><path d="M1 17a16 16 0 0 0 32 0z" fill="#3fa0e6" /><path d="M12.500 12c0-6 9.500-6 9.500 0 0 4-4.800 4-4.800 9" stroke="#fff" strokeWidth="2.300" fill="none" /><circle cx="17.200" cy="25.500" r="1.700" fill="#fff" /></svg> },
  { n: "terminal", dot: true, i: <svg viewBox="0 0 34 34" className="size-[34px]"><rect x="1.500" y="4.500" width="31" height="25" rx="3" fill="#4b4b4b" stroke="#6b6b6b" /><path d="M6 8l4 2.500L6 13M11 14.500h5" stroke="#fff" strokeWidth="1.400" fill="none" /></svg> },
  { n: "chrome", dot: true, i: <svg viewBox="0 0 34 34" className="size-[34px]"><path d="M17 17L2.280 8.500A17 17 0 0 1 31.720 8.500z" fill="#e33b2e" /><path d="M17 0a17 17 0 0 1 14.720 8.500H17L9.600 12.800 2.280 8.500A17 17 0 0 1 17 0z" fill="#e33b2e" /><path d="M31.720 8.500A17 17 0 0 1 17 34l7.400-12.700A8.500 8.500 0 0 0 17 8.500z" fill="#fbc116" /><path d="M2.280 8.500A17 17 0 0 0 17 34l7.400-12.700a8.500 8.500 0 0 1-14.800 0z" fill="#2f9c4a" /><circle cx="17" cy="17" r="8.300" fill="#fff" /><circle cx="17" cy="17" r="6.500" fill="#1a73e8" /></svg> },
  { n: "discord", dot: true, i: <div className="relative flex size-[34px] items-center justify-center rounded-full bg-[#5865f2] text-white"><FaDiscord size={23} /><span className="absolute -top-[6px] left-[18px] flex h-[17px] w-[21px] items-center justify-center rounded-full bg-[#149024] font-['Noto_Sans'] text-[11px] leading-none">29</span></div> },
  { n: "viewer", dot: true, i: <svg viewBox="0 0 34 34" className="size-[34px]"><rect x="1" y="4" width="32" height="26" rx="3" fill="#e3e1d8" /><path d="M1 24h32v3c0 2-1 3-3 3H4c-2 0-3-1-3-3z" fill="#aaa697" /><circle cx="25" cy="11" r="3" fill="#fff" /><circle cx="15" cy="15" r="8.500" fill="#f0efeb" stroke="#4a4a4a" strokeWidth="1.800" /><path d="M21 21l6 5.500" stroke="#3c3c3c" strokeWidth="2.600" /></svg> },
  { n: "disk", i: <svg viewBox="0 0 34 34" className="size-[34px]"><rect x="4" y="1" width="26" height="32" rx="3" fill="#b3b3b3" />{[7, 17.5, 27.5].map((y) => <g key={y}><circle cx="8.500" cy={y} r="1.300" fill="#9aa37e" stroke="#6f7560" strokeWidth=".6" /><path d={`M11.500 ${y}h5`} stroke="#7d7d7d" strokeWidth="1.200" strokeDasharray="1.300 .6" /></g>)}</svg> },
  { n: "ssd1", i: <Ssd /> },
  { n: "ssd2", i: <Ssd /> },
  { n: "trash", i: <div className="relative flex h-8 w-[26px] items-end justify-center rounded-[3px] bg-[#cfcfcf] pb-1 text-[#1f9a1f]"><span className="absolute left-[2px] right-[2px] top-[2px] h-[5px] rounded-sm border border-[#8d8d8d] bg-white" /><FaRecycle size={14} /></div> },
];

function Dock() {
  return (
    <div className="relative flex h-14 items-center bg-[#1b0f16] pl-1">
      <svg className="absolute inset-0 h-14 w-[1920px]" viewBox="0 0 1920 56" fill="none" stroke="#2a1424" strokeWidth="2"><path d="M510 0l75 56M655 0q70 40 160 56M1327 0q-50 36-108 56M1344 0q-30 30-70 56" /></svg>
      {DOCK.map((d) => (
        <React.Fragment key={d.n}>
          {d.n === "terminal" && <span className="relative ml-px h-[34px] w-px bg-[#4a4146]" />}
          <div className="relative flex h-14 w-[54px] shrink-0 items-center justify-center">
            <div className={"flex size-[50px] items-center justify-center rounded-xl " + (d.n === "chrome" ? "bg-[#463d43]" : "")}>{d.i}</div>
            {d.dot && <span className="absolute bottom-[3px] size-1 rounded-full bg-[#e95420]" />}
          </div>
        </React.Fragment>
      ))}
      <div className="relative ml-auto mr-[19px] grid grid-cols-3 gap-[4px]">
        {Array.from({ length: 9 }, (_, i) => <span key={i} className="size-[5px] rounded-[1.5px] bg-[#f2f2f2]" />)}
      </div>
    </div>
  );
}

export default function App() {
  return (
    <div className="h-[1080px] w-[1920px] overflow-hidden">
      <TopBar />
      <TabStrip />
      <Toolbar />
      <Page />
      <Dock />
    </div>
  );
}
